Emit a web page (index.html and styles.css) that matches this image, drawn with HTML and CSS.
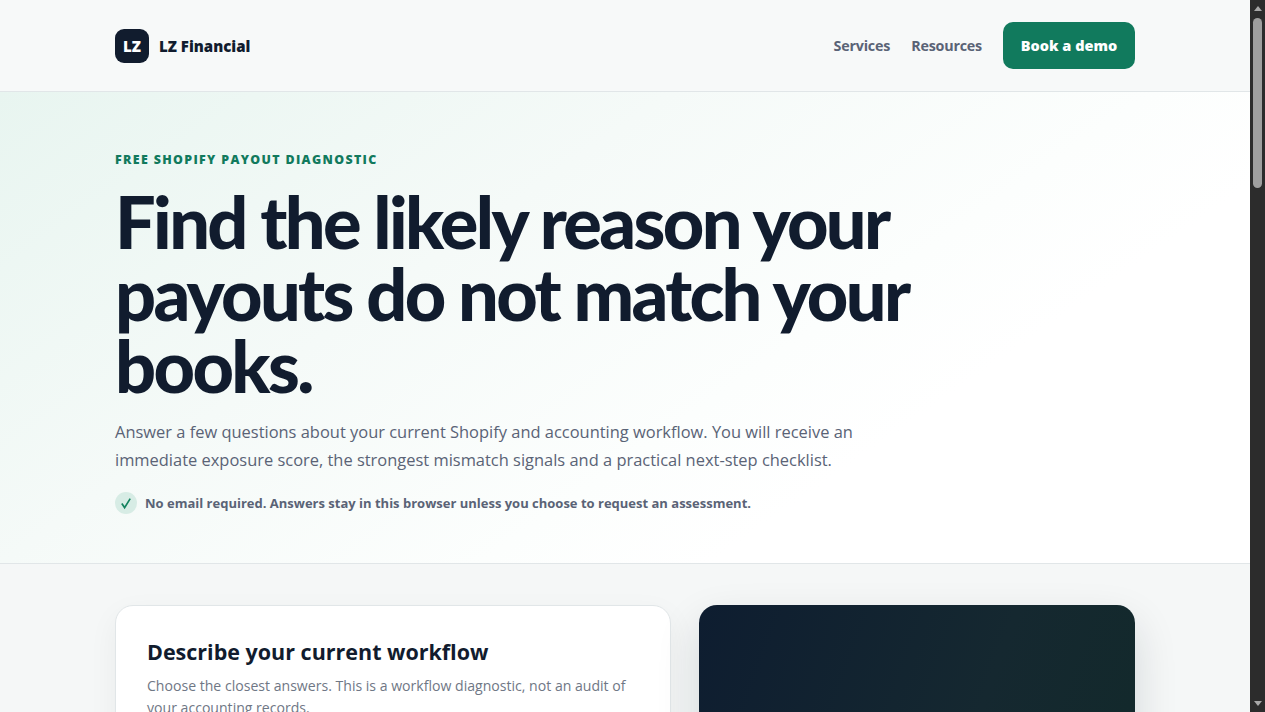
FILE: index.html
```html
<!DOCTYPE html>
<html lang="en">
<head>
    <meta charset="UTF-8">
    <meta name="viewport" content="width=device-width, initial-scale=1.0">
    <title>Shopify payout diagnostic - LZ Financial</title>
    <link rel="stylesheet" href="styles.css">
</head>
<body>
    <header class="site-header">
        <div class="wrapper header-row">
            <a class="brand" href="#">
                <span class="brand-mark">LZ</span>
                <span class="brand-name">LZ Financial</span>
            </a>
            <nav class="nav">
                <a class="nav-link" href="#">Services</a>
                <a class="nav-link" href="#">Resources</a>
                <a class="demo-button" href="#">Book a demo</a>
            </nav>
        </div>
    </header>
    <section class="hero">
        <div class="wrapper">
            <p class="eyebrow">FREE SHOPIFY PAYOUT DIAGNOSTIC</p>
            <h1 class="hero-title">Find the likely reason your payouts do not match your books.</h1>
            <p class="hero-text">Answer a few questions about your current Shopify and accounting workflow. You will receive an immediate exposure score, the strongest mismatch signals and a practical next-step checklist.</p>
            <div class="privacy-note">
                <span class="check-badge">
                    <svg width="14" height="14" viewBox="0 0 14 14" fill="none">
                        <path d="M2.8 7.6 5.6 11.6 11.2 2.6" stroke="#14835f" stroke-width="1.7"/>
                    </svg>
                </span>
                <span>No email required. Answers stay in this browser unless you choose to request an assessment.</span>
            </div>
        </div>
    </section>
    <main class="tool-section">
        <div class="wrapper tool-grid">
            <div class="form-card">
                <h2 class="form-title">Describe your current workflow</h2>
                <p class="form-text">Choose the closest answers. This is a workflow diagnostic, not an audit of your accounting records.</p>
            </div>
            <aside class="score-card"></aside>
        </div>
    </main>
    <div class="scrollbar">
        <span class="arrow-up"></span>
        <span class="scroll-thumb"></span>
        <span class="arrow-down"></span>
    </div>
</body>
</html>
```

FILE: styles.css
```css
body {
    margin: 0 15px 0 0;
    padding: 0;
    background-color: #f5f7f7;
    color: #111c2e;
    font-family: "Open Sans", "Noto Sans", sans-serif;
}

a {
    text-decoration: none;
}

.wrapper {
    width: 1020px;
    margin: 0 auto;
}

.site-header {
    height: 91px;
    background-color: #f7f9f9;
    border-bottom: 1px solid #e1e6e8;
}

.header-row {
    height: 100%;
    display: flex;
    justify-content: space-between;
    align-items: center;
}

.brand {
    display: flex;
    align-items: center;
    gap: 10px;
    color: #111c2e;
}

.brand-mark {
    width: 34px;
    height: 34px;
    display: flex;
    justify-content: center;
    align-items: center;
    border-radius: 9px;
    background-color: #111c2e;
    color: #ffffff;
    font-size: 15px;
    font-weight: 800;
}

.brand-name {
    font-size: 15px;
    font-weight: 800;
}

.nav {
    display: flex;
    align-items: center;
    gap: 21px;
}

.nav-link {
    color: #5a6376;
    font-size: 14.3px;
    font-weight: 700;
    letter-spacing: -0.2px;
}

.demo-button {
    width: 132px;
    height: 47px;
    display: flex;
    justify-content: center;
    align-items: center;
    border-radius: 10px;
    background-color: #117a5d;
    color: #ffffff;
    font-size: 14.5px;
    font-weight: 800;
}

.hero {
    height: 471px;
    background: linear-gradient(145deg, #e8f5f0 0%, #f5faf8 35%, #fcfefd 60%, #ffffff 72%);
    border-bottom: 1px solid #e1e6e8;
}

.eyebrow {
    margin: 0;
    padding-top: 60px;
    color: #117a5d;
    font-size: 12.4px;
    line-height: 16px;
    font-weight: 800;
    letter-spacing: 1.35px;
}

.hero-title {
    margin: 17px 0 0;
    max-width: 860px;
    font-family: "Lato", "Open Sans", sans-serif;
    font-size: 72px;
    line-height: 72px;
    font-weight: 900;
    letter-spacing: -2.65px;
}

.hero-text {
    margin: 17px 0 0;
    max-width: 760px;
    color: #5a6376;
    font-size: 16.45px;
    line-height: 28px;
    font-weight: 400;
}

.privacy-note {
    margin-top: 18px;
    display: flex;
    align-items: center;
    gap: 8px;
    color: #5a6376;
    font-size: 13px;
    font-weight: 700;
}

.check-badge {
    width: 22px;
    height: 22px;
    display: flex;
    justify-content: center;
    align-items: center;
    border-radius: 50%;
    background-color: #d7ece5;
}

.tool-section {
    padding: 41px 0 60px;
}

.tool-grid {
    display: grid;
    grid-template-columns: 555.5px 436.5px;
    gap: 28px;
    align-items: stretch;
}

.form-card {
    min-height: 2140px;
    padding: 30px 31px;
    background-color: #ffffff;
    border: 1px solid #e1e6e8;
    border-radius: 18px;
    box-shadow: 0 10px 30px rgba(17, 28, 46, 0.05);
}

.form-title {
    margin: 0;
    font-size: 21.5px;
    line-height: 32px;
    font-weight: 700;
}

.form-text {
    margin: 7px 0 0;
    max-width: 485px;
    color: #6f7785;
    font-size: 14.08px;
    line-height: 22px;
    font-weight: 400;
}

.score-card {
    background: linear-gradient(110deg, #0e1d30 0, #152830 300px, #13292c 440px);
    border-radius: 18px;
    box-shadow: 0 18px 44px rgba(17, 28, 46, 0.14);
}

.scrollbar {
    position: fixed;
    top: 0;
    right: 0;
    bottom: 0;
    width: 15px;
    display: flex;
    flex-direction: column;
    align-items: center;
    background-color: #2c2c2c;
}

.arrow-up {
    margin-top: 6px;
    border-left: 4.5px solid transparent;
    border-right: 4.5px solid transparent;
    border-bottom: 5px solid #a8a8a8;
}

.scroll-thumb {
    width: 9px;
    height: 170px;
    margin-top: 7px;
    border-radius: 5px;
    background-color: #9f9f9f;
}

.arrow-down {
    margin-top: auto;
    margin-bottom: 6px;
    border-left: 4.5px solid transparent;
    border-right: 4.5px solid transparent;
    border-top: 5px solid #a8a8a8;
}
```
